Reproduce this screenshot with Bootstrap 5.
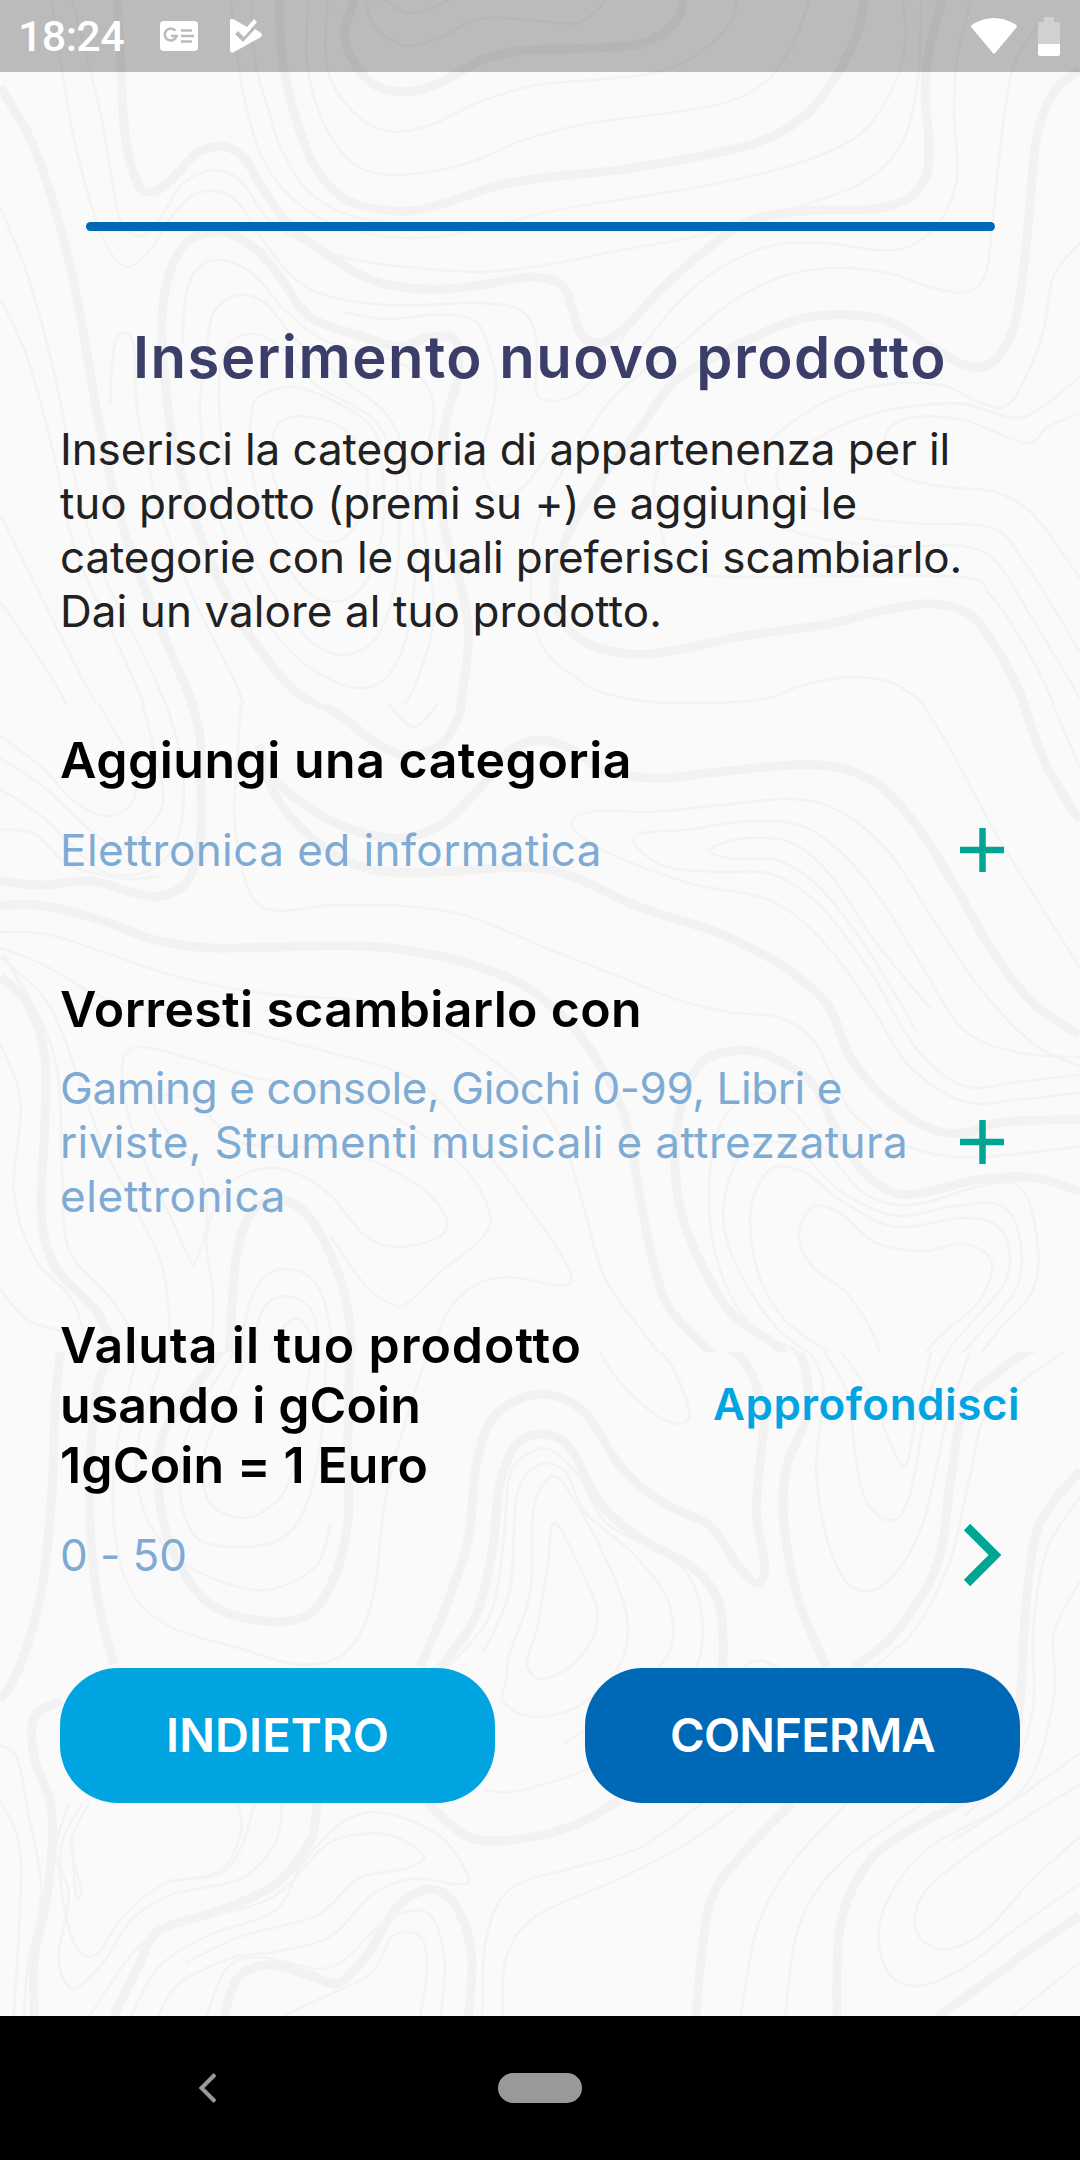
<!DOCTYPE html>
<html lang="it">
<head>
<meta charset="utf-8">
<meta name="viewport" content="width=device-width, initial-scale=1">
<title>Inserimento nuovo prodotto</title>
<link href="https://cdn.jsdelivr.net/npm/bootstrap@5.3.0/dist/css/bootstrap.min.css" rel="stylesheet">
<style>
body{font-family:Inter,Roboto,"Noto Sans",sans-serif;background:#fafafa;color:#212121}
.phone{width:1080px;height:2160px}
.contours{z-index:0}
.contours path{fill:none;vector-effect:non-scaling-stroke;stroke:#f3f3f3;stroke-width:2.6}
.contours path.bold{stroke:#f2f2f2;stroke-width:9}
.statusbar{height:72px;background:rgba(0,0,0,.25);padding:0 18px 0 18px}
.clock{font-family:Roboto,sans-serif;font-size:43px;line-height:72px;width:142px;font-weight:500}
.gap-play{margin-left:32px}
.gap-batt{margin-left:21px;margin-right:2px}
.content{padding:0 60px;z-index:1}
.progress-line{height:9px;border-radius:5px;background:#0069b7;margin:150px 25px 0 26px}
.ln{display:block;white-space:nowrap;width:max-content}
.page-title{font-size:58px;line-height:72px;font-weight:600;color:#3c3e6a;margin:90px 0 29px}
.intro{font-size:44px;line-height:54px;margin-bottom:92px}
.sec{font-size:50px;line-height:60px;font-weight:600;color:#000;margin:0}
.val{font-size:44px;line-height:54px;color:#7eabd4}
.row-a{margin-top:33px;margin-bottom:102px}
.row-b{margin-top:22px;margin-bottom:92px}
.row-c{margin-top:33px}
.act{width:76px}
.more{font-size:44px;line-height:54px;font-weight:600;color:#00a4e2;text-decoration:none;margin-top:-3px}
.acts{gap:90px;margin-top:86px}
.btn-app{height:135px;border-radius:58px;font-size:47px;font-weight:600;color:#fff;border:0;padding:0}
.btn-back{background:#00a4e0}.btn-ok{background:#0069b7}
.navbar-sys{height:144px;background:#000;padding-left:198px}
.home-pill{width:84px;height:30px;border-radius:15px;background:#999;margin-left:281px}
</style>
</head>
<body>
<div class="phone position-relative overflow-hidden d-flex flex-column">
<svg class="contours position-absolute top-0 start-0" width="1080" height="2016" viewBox="0 0 1080 2016" id="contours"></svg>
<header class="statusbar d-flex align-items-center text-white position-relative flex-shrink-0">
  <span class="clock"><span class="ln" data-w="106">18:24</span></span>
  <svg width="38" height="30" viewBox="0 0 38 30"><rect width="38" height="30" rx="4" fill="#fff"/><path d="M15.500 9.800A6 6 0 1 0 16.600 15H11" fill="none" stroke="#bbb" stroke-width="2.600"/><path d="M21 9.500h11M21 15h13M21 20.500h11" stroke="#bbb" stroke-width="2.600"/></svg>
  <svg class="gap-play" width="33" height="36" viewBox="0 0 33 36"><path d="M0 3Q0 0 3 1L17 9 24 1 27 4 14 19 8 13 5 16 13 24 25 11 31 15Q33 17 31 19L4 34Q0 36 0 32Z" fill="#fff"/></svg>
  <svg class="ms-auto" width="46" height="36" viewBox="0 0 46 36"><path d="M1 10Q-1 8 2 6Q23-6 44 6Q47 8 45 10L25 34Q23 37 21 34Z" fill="#fff"/></svg>
  <svg class="gap-batt" width="22" height="39" viewBox="0 0 22 39"><path d="M0 27V7Q0 5 2 5H6V0H16V5H20Q22 5 22 7V27Z" fill="#d1d1d1"/><path d="M0 27H22V37Q22 39 20 39H2Q0 39 0 37Z" fill="#fff"/></svg>
</header>
<main class="content position-relative flex-grow-1">
  <div class="progress-line"></div>
  <h1 class="page-title"><span class="ln mx-auto" data-w="814">Inserimento nuovo prodotto</span></h1>
  <p class="intro"><span class="ln" data-w="890">Inserisci la categoria di appartenenza per il</span><span class="ln" data-w="797">tuo prodotto (premi su +) e aggiungi le</span><span class="ln" data-w="902">categorie con le quali preferisci scambiarlo.</span><span class="ln" data-w="602">Dai un valore al tuo prodotto.</span></p>
  <h2 class="sec"><span class="ln" data-w="572">Aggiungi una categoria</span></h2>
  <div class="row-a d-flex justify-content-between align-items-center">
    <div class="val"><span class="ln" data-w="542">Elettronica ed informatica</span></div>
    <div class="act d-flex justify-content-center"><svg width="44" height="44" viewBox="0 0 44 44"><path d="M22.500 0V44M0 22H44" stroke="#00a693" stroke-width="6.500"/></svg></div>
  </div>
  <h2 class="sec"><span class="ln" data-w="582">Vorresti scambiarlo con</span></h2>
  <div class="row-b d-flex justify-content-between align-items-center">
    <div class="val"><span class="ln" data-w="782">Gaming e console, Giochi 0-99, Libri e</span><span class="ln" data-w="848">riviste, Strumenti musicali e attrezzatura</span><span class="ln" data-w="226">elettronica</span></div>
    <div class="act d-flex justify-content-center"><svg width="44" height="44" viewBox="0 0 44 44"><path d="M22.500 0V44M0 22H44" stroke="#00a693" stroke-width="6.500"/></svg></div>
  </div>
  <div class="d-flex justify-content-between align-items-center">
    <h2 class="sec"><span class="ln" data-w="522">Valuta il tuo prodotto</span><span class="ln" data-w="361">usando i gCoin</span><span class="ln" data-w="368">1gCoin = 1 Euro</span></h2>
    <a href="#" class="more"><span class="ln" data-w="307">Approfondisci</span></a>
  </div>
  <div class="row-c d-flex justify-content-between align-items-center">
    <div class="val"><span class="ln" data-w="127">0 - 50</span></div>
    <div class="act d-flex justify-content-center"><svg width="38" height="54" viewBox="0 0 38 54" overflow="visible"><path d="M4 -1L32 27 4 55" fill="none" stroke="#00a693" stroke-width="9"/></svg></div>
  </div>
  <div class="acts d-flex">
    <button class="btn btn-app btn-back flex-fill w-50"><span class="ln mx-auto" data-w="223">INDIETRO</span></button>
    <button class="btn btn-app btn-ok flex-fill w-50"><span class="ln mx-auto" data-w="265">CONFERMA</span></button>
  </div>
</main>
<footer class="navbar-sys d-flex align-items-center position-relative flex-shrink-0">
  <svg width="19" height="30" viewBox="0 0 19 30"><path d="M17 1.500L3.500 15 17 28.500" fill="none" stroke="#999" stroke-width="4"/></svg>
  <div class="home-pill"></div>
</footer>
</div>
<script src="https://cdn.jsdelivr.net/npm/bootstrap@5.3.0/dist/js/bootstrap.bundle.min.js"></script>
<script>
// Contour lines per screen band: [y offset, y scale, band end, lines]; "*" marks a bold line, "z" a closed one.
const bands=[[0,.4592,704,`*0,190 40,290 75,430 105,600 125,760 145,930 175,1130 220,1320 265,1480 290,1568
75,0 90,150 110,320 140,480 165,560 190,580 220,540 245,480 275,430 310,415 345,440 380,520 430,610 490,650 580,665 700,660 760,680 780,750 778,850 800,873 840,855 880,790 920,700
105,0 125,120 145,240 160,370 175,480 205,515 235,470 265,400 310,370 350,395 385,470 430,520 500,560 580,580 700,592 800,575 900,545 1010,515 1080,485 1180,440 1260,390 1310,310 1332,180 1338,0
*170,0 175,130 182,300 200,400 222,418 250,390 285,335 322,318 355,345 385,420 420,490 480,560 550,615 630,630 700,620 770,603 815,620 830,670 845,730 875,745 910,710 960,630 1020,550 1090,480 1180,458 1270,455 1320,430 1345,380 1348,300 1343,200 1350,100 1368,0
335,0 345,130 360,250 380,340 410,410 470,480 560,515 640,515 720,490 800,460 920,430 1040,400 1160,355 1250,290 1300,180 1315,80 1310,0
365,0 370,130 390,240 410,330 450,420 510,470 590,490
*405,0 410,130 430,260 460,370 510,440 590,460 650,440 720,405 800,385 900,370 1000,345 1100,310 1170,250 1220,150 1245,70 1255,0
448,0 445,130 460,230 490,320 530,370 590,380 680,355 760,305 850,270 950,250 1050,225 1110,180 1150,100 1175,0
475,0 475,150 510,240 560,285 620,275 700,220 780,185 880,172 960,155 1020,110 1060,50 1070,0
*515,0 500,70 515,140 545,185 590,200 640,180 700,130 760,110 850,105 930,95 980,50 993,0
530,0 545,60 590,100 640,80 700,40 780,45 840,50 880,0
558,0 595,28 640,10 650,0
1410,0 1390,120 1385,250 1390,380 1370,470 1330,530 1280,545 1200,530 1120,535 1050,580 990,650 940,740 900,820
*1568,150 1530,200 1505,300 1495,450 1485,600 1470,720 1440,790 1400,795 1340,745 1290,700 1220,685 1150,700 1060,760 980,830 930,930 870,1050 820,1180 805,1300 840,1390 920,1425 1000,1410 1080,1385 1200,1360 1280,1330 1350,1315 1410,1340 1450,1420 1478,1500 1495,1568
1510,50 1470,150 1450,350 1440,500 1430,600 1400,637 1350,625 1290,595 1220,583 1140,600 1060,660 980,760 900,850 850,950 790,1100 770,1250 785,1400 840,1480 880,1510 960,1530 1100,1525 1160,1495 1230,1475 1300,1490 1370,1568
1568,530 1530,600 1515,720 1490,820 1460,885 1420,875 1370,840 1300,835 1220,860 1140,930 1090,1010 1085,1060 1130,1140 1200,1175 1300,1190 1400,1190 1450,1230 1500,1350 1568,1520
1568,820 1510,890 1470,910 1400,880 1320,885 1250,910 1180,960 1130,1020 1140,1080 1210,1120 1330,1140 1440,1150 1490,1230 1568,1420
1568,900 1520,930 1490,965 1400,915 1320,910 1285,950 1300,1030 1370,1060 1440,1070 1500,1120 1568,1260
980,950 950,1050 960,1160 980,1220 1040,1255 1380,1255 1440,1300 1500,1440 1540,1568
*490,1568 425,1500 370,1400 320,1270 280,1120 250,950 238,800 235,700 245,600 270,530 320,505 370,540 410,610 450,690 520,730 580,755 620,735 660,740 665,820 650,900 640,1000 645,1150 670,1280 680,1400 665,1568
500,680 560,695 640,685 690,700 710,760 720,850 700,1000 720,1080 760,1060 800,980
265,750 270,640 290,580 325,567 370,600 410,670 470,740 560,780 610,820 630,900 610,1050 620,1200 630,1350 600,1500 570,1568
z300,760 310,680 345,643 385,660 430,740 500,830 560,900 590,1000 600,1150 600,1300 580,1430 540,1495 480,1480 410,1400 350,1250 310,1080 290,900
z320,800 335,745 370,727 410,760 460,840 540,910 570,1000 580,1150 570,1300 540,1400 490,1425 440,1380 380,1250 335,1080 320,930
z365,900 380,860 425,843 480,870 540,930 555,1020 555,1160 530,1270 490,1310 440,1280 390,1150 365,1020
z395,960 410,915 450,908 500,935 530,1000 530,1100 500,1170 460,1175 420,1110 395,1030
160,880 165,760 180,725 195,760 200,900 230,1100 280,1300 340,1480 360,1568
0,450 40,600 80,820 110,1050 150,1250 210,1430 250,1568
0,650 40,780 80,1000 110,1200 170,1400 220,1568
0,1120 60,1300 120,1480 155,1568
0,1310 60,1440 110,1568`],
[700,.4464,1352,`*276,0 290,80 292,200 290,320 270,410 230,440 190,430 130,405 60,415 0,405
*0,460 60,460 150,495 220,535 300,555 400,553 500,550 590,560 680,590 760,640 830,730 880,840 910,950 930,1120 950,1270 975,1370 1040,1475 1090,1568
*437,-10 490,30 540,90 590,125 640,100 665,40 670,0
560,0 600,60 640,0
*385,160 410,240 470,330 540,380 640,385 760,375 830,395 930,465 1040,520 1130,590 1200,680 1235,800 1290,900 1350,960 1400,970 1460,945 1568,940
*375,100 400,180 480,270 570,310 640,280 700,190 735,120 780,90 830,110 880,160 960,175 1050,160 1180,145 1260,175 1320,260 1380,400 1440,560 1500,680 1568,750
*1484,0 1520,150 1568,270
1525,0 1568,150
350,0 345,120 340,250 350,370 370,450 410,472 480,460 600,463 690,490 800,560 900,620 980,670 1060,700 1130,710 1180,760 1210,850 1240,930 1300,990 1400,1025 1568,1000
0,520 70,525 160,570 270,625 400,660 530,675 620,720 700,790 770,880 820,1000 850,1150 880,1300 950,1450 1000,1568
1568,820 1500,770 1420,640 1350,480 1290,340 1220,250 1150,222 1050,235 950,250 860,250 830,280 880,340 1000,410 1120,450 1200,550 1270,700 1320,820 1400,900 1480,895 1568,880
1568,800 1480,790 1400,740 1340,600 1280,450 1220,340 1160,280 1080,272 1000,290 920,305 960,370 1040,385 1120,390 1190,460 1260,600 1330,780 1400,865 1480,855 1568,840
1350,690 1270,540 1210,400 1150,320 1080,310 1030,335 1060,355 1130,360 1190,420 1260,560 1330,740
1335,0 1380,110 1450,310 1568,600
*0,620 40,680 65,800 65,950 60,1150 80,1270 140,1370 165,1460 170,1568
0,555 60,590 140,660 230,700 350,740 480,790 600,850 680,970 750,1100 830,1298 740,1293 690,1310 650,1370 625,1480 610,1568
280,1270 260,1200 230,1100 200,1000 180,880 180,800 210,778 290,810 380,850 480,870 600,960 680,1060 712,1160 690,1220 640,1280 600,1340 575,1357 530,1310 480,1200
280,1270 300,1180 290,1060 240,960 225,890 280,900 340,985 400,1000 500,1010 600,1080 645,1150 640,1200 580,1225 530,1200 480,1110 430,1060 380,1050 330,1090 300,1200 310,1350 300,1568
*330,1568 335,1400 345,1230 370,1140 410,1120 450,1160 490,1280 508,1400 510,1568
350,1568 355,1400 380,1300 420,1275 460,1310 480,1420 480,1568
370,1568 370,1430 390,1350 430,1340 460,1400 460,1568
400,1568 395,1450 430,1385 455,1450 440,1568
*1180,1568 1130,1450 1060,1370 1000,1200 980,1050 990,900 1020,810 1070,785 1120,800 1180,860 1210,950 1250,1050 1300,1105 1350,1100 1420,1075 1500,1070 1568,1100
1200,1568 1180,1480 1090,1400 1040,1250 1030,1080 1050,940 1100,880 1150,920 1200,1010 1260,1110 1330,1130 1420,1090 1480,1090 1505,1200 1500,1320 1440,1430 1380,1568
1240,1568 1210,1500 1130,1410 1070,1270 1050,1150 1070,1030 1110,990 1160,1010 1220,1100 1300,1155 1380,1135 1450,1130 1480,1200 1475,1320 1400,1460 1360,1568
1270,1568 1220,1480 1140,1390 1100,1280 1090,1140 1120,1050 1170,1060 1220,1120 1300,1180 1400,1160 1455,1190 1460,1300 1380,1450 1340,1568
1300,1568 1270,1430 1230,1330 1180,1270 1160,1200 1180,1135 1220,1150 1270,1215 1340,1235 1400,1218 1440,1260 1420,1350 1350,1450 1330,1568
0,575 70,680 115,850 150,1000 200,1150 240,1300 250,1568
5,570 60,720 85,850 90,1050 100,1230 160,1340 200,1450 200,1568
0,770 30,900 20,1100 50,1250 110,1360 140,1568
0,1320 40,1390 100,1430 115,1568
0,200 60,260 120,350 160,390 220,380 260,300 265,150 240,0
0,290 50,300 100,370 180,400 230,395
0,80 60,150 110,230 160,260 195,220 190,140 140,0
205,0 225,120 235,240 180,330 130,290 60,190 0,130`],
[1340,.523,2016,`*90,0 80,120 75,300 60,480 30,620 0,690
*170,0 140,100 130,300 140,480 165,620
*332,0 300,60 240,170 230,280 250,400 300,500 370,535 440,530 480,470 505,350 505,200 508,0
352,0 280,150 260,270 280,370 330,395 400,385 440,330 465,200 475,0
370,0 300,200 300,300 340,338 385,325 425,250 455,0
205,0 170,200 165,350 190,480 250,550 350,590 430,620 500,600 540,500 560,300 590,150 628,0
245,0 200,200 210,330 260,420 340,470 400,475 460,430 480,350
*610,625 650,500 680,380 690,250 710,160 750,115 800,105 850,140 900,240 960,310 1030,355 1070,430 1100,465 1110,430 1098,330 1106,200 1109,147 1086,51 1040,-6 975,-76
*640,625 690,530 715,400 725,280 750,200 790,180 830,210 870,310 930,380 1000,430 1040,490 1050,580 1045,700
650,625 710,530 730,400 740,260 770,215 800,210 840,260 880,350 950,400 1000,450 1020,550 1000,650 900,790 760,860 700,860
700,600 740,480 750,300 780,240 820,250 850,330 920,410 970,500 970,600 900,700 820,770
z735,650 740,600 770,480 775,320 805,260 840,320 880,420 910,530 900,620 840,700 770,720 730,690
z765,620 780,550 795,430 805,350 840,430 868,530 840,610 790,648
*620,885 680,950 750,955 830,930 900,880
860,0 900,80 960,150 1000,150 980,60 945,0
*1200,625 1160,500 1138,350 1142,243 1172,140 1165,38 1128,-10 1072,-76
*1240,625 1300,560 1360,430 1380,270 1400,130 1450,60 1520,0
1080,625 1100,612 1130,625
1270,625 1330,550 1380,420 1410,250 1440,130 1568,0
*1568,250 1510,350 1490,500 1480,700 1460,800 1400,880 1330,930 1260,1000 1220,1120 1215,1293
1160,0 1195,80 1185,250 1205,400 1240,475 1290,460 1340,350 1375,150 1415,0
1185,0 1230,100 1240,200 1255,300 1290,345 1320,300 1350,100 1385,0
1210,0 1265,110 1310,240 1330,150 1355,0
*1150,885 1080,980 1030,1080 1010,1293
1230,885 1150,1000 1100,1120 1075,1293
1340,885 1220,1000 1160,1120 1140,1293
1568,850 1480,920 1400,990 1340,1060 1330,1130 1370,1165 1430,1130 1500,1030 1568,950
1568,790 1460,890 1340,980 1280,1100 1285,1200 1330,1235 1400,1200 1480,1120 1568,1040
*1568,1100 1500,1160 1440,1220 1360,1293
1568,1190 1470,1293
1568,300 1520,400 1500,550 1500,700 1470,820 1400,910
1568,460 1530,560 1530,680 1490,850 1380,960
*90,690 50,720 50,800 75,900 70,1050 50,1180 50,1293
*460,885 450,960 400,1040 320,1090 230,1130 200,1200 165,1293
410,885 400,960 350,1030 250,1060 190,1110 150,1190 105,1240 85,1180 100,1060 80,980 100,885
370,885 350,970 320,1020 240,1040 180,1100 140,1175 110,1160 90,1060 90,960 120,885
345,885 350,940 320,1015 240,1035
105,960 110,1060 118,1050 103,960 130,885
0,775 25,800 40,900 60,1050 40,1200 35,1293
0,880 30,990 20,1293
190,1293 230,1200 300,1140 400,1090 440,1000 500,920 560,905 640,950 680,1030 660,1040 600,1030 540,1060 480,1140 400,1170 340,1180 260,1230 230,1293
130,1293 220,1140 370,1080 420,1040 480,960 560,945 615,985 590,1010 520,1030 460,1100 350,1140 270,1190
*325,1293 345,1220 390,1195 450,1215 490,1230 530,1180 580,1080 630,1050 665,1090 685,1180 680,1293
300,1293 330,1200 380,1180 480,1200 560,1110 620,1095 645,1180 640,1293
410,1293 480,1250 540,1210 570,1140 610,1140 620,1200 610,1293
700,1293 705,1150 740,1050 830,1010 930,970 1020,885
730,1293 735,1180 780,1100 900,1030 1000,960 1080,885`]];
let out='',top0=0;
bands.forEach(([oy,sy,end,src],k)=>{
  out+=`<clipPath id="band${k}"><rect x="0" y="${top0}" width="1080" height="${end-top0}"/></clipPath><g clip-path="url(#band${k})">`;
  top0=end;
  for(const line of src.split('\n')){
    const bold=line[0]=='*',closed=line[0]=='z';
    const p=line.replace(/^[*z]/,'').split(' ').map(s=>{const [x,y]=s.split(',').map(Number);return [x*.6888,y*sy+oy]});
    const n=p.length,at=i=>closed?p[(i+n)%n]:p[Math.max(0,Math.min(n-1,i))];
    let d='M'+p[0].map(v=>v.toFixed(1));
    for(let i=0;i<(closed?n:n-1);i++){
      const a=at(i-1),b=at(i),c=at(i+1),e=at(i+2);
      d+='C'+[b[0]+(c[0]-a[0])/6,b[1]+(c[1]-a[1])/6,c[0]-(e[0]-b[0])/6,c[1]-(e[1]-b[1])/6,c[0],c[1]].map(v=>v.toFixed(1));
    }
    out+=`<path${bold?' class="bold"':''} d="${d}"/>`;
  }
  out+='</g>';
});
document.getElementById('contours').innerHTML=out;
// Track each line of text out to its set width.
document.querySelectorAll('[data-w]').forEach(e=>{
  const w=e.getBoundingClientRect().width;
  e.style.letterSpacing=(e.dataset.w-w)/e.textContent.length+'px';
});
</script>
</body>
</html>
